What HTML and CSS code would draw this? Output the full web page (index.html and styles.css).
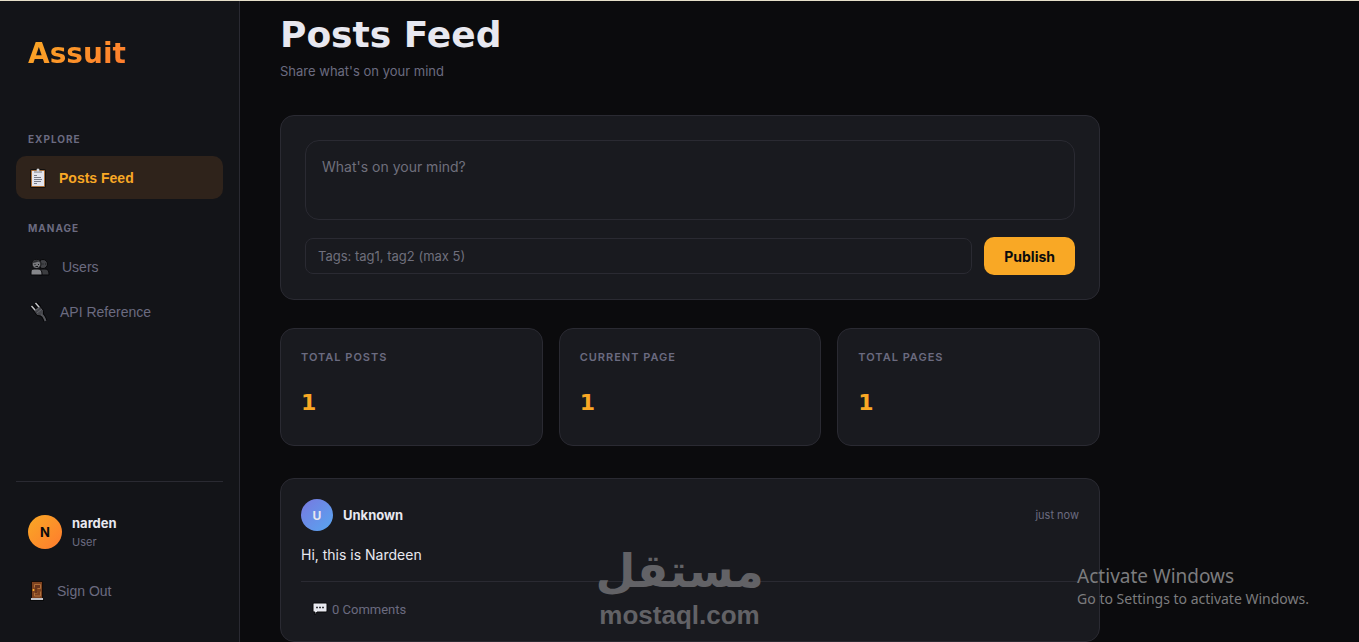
FILE: index.html
```
<!DOCTYPE html>
<html lang="en">
<head>
<meta charset="UTF-8">
<meta name="viewport" content="width=device-width, initial-scale=1.0">
<title>Assuit - Posts Feed</title>
<link rel="stylesheet" href="styles.css">
</head>
<body>
<aside class="sidebar">
  <div class="logo">Assuit</div>
  <nav class="nav">
    <div class="nav-label">Explore</div>
    <button type="button" class="nav-item active">
      <svg class="icon-board" width="17" height="20" viewBox="0 0 17 20">
        <rect x="0" y="1" width="16" height="19" rx="2" fill="#120f0d"/>
        <rect x="1" y="2" width="14" height="17" rx="1" fill="#a8703c"/>
        <rect x="2" y="3" width="12" height="15" fill="#e3e5ee"/>
        <path d="M4 3h8v2H4z" fill="#aeb0b8"/>
        <circle cx="8" cy="2" r="1.5" fill="#d5d7dd"/>
        <path d="M4 7.500h3M4 9.500h7M4 11.500h8M4 13.500h7M4 15.500h3" stroke="#777b86"/>
      </svg>
      <span>Posts Feed</span>
    </button>
    <div class="nav-label">Manage</div>
    <button type="button" class="nav-item">
      <svg class="icon-users" width="20" height="18" viewBox="0 0 20 18">
        <path d="M9 17v-3c0-2 1-3 3-3h3c3 0 4 2 4 5v1z" fill="#3c3d40" stroke="#070709"/>
        <circle cx="13" cy="6" r="4.500" fill="#424347" stroke="#070709"/>
        <path d="M1 17v-3c0-2 1-3 3-3h4c3 0 4 2 4 5v1z" fill="#85868a" stroke="#070709"/>
        <circle cx="6.500" cy="6" r="4.500" fill="#77787c" stroke="#070709"/>
        <path d="M2.500 5c1-4 7-4 8 0l-2-1.500-3 1z" fill="#2c2d30"/>
        <path d="M4.500 6.500h1M8 6.500h1M5.500 8.500h2.500M12.500 6h1M15 6h1" stroke="#17181b"/>
      </svg>
      <span>Users</span>
    </button>
    <button type="button" class="nav-item">
      <svg class="icon-plug" width="18" height="20" viewBox="0 0 18 20">
        <path d="M10 12c4 1 4 4 5.500 7" fill="none" stroke="#050506" stroke-width="4"/>
        <path d="M1.500 4l4 4M5.500 1l4 4" stroke="#050506" stroke-width="4"/>
        <path d="M3.500 8.500l6-5 4 5v4l-2.500 1.500-4-.5z" fill="#45464b" stroke="#050506"/>
        <path d="M1.500 4l3.500 4M5.500 1l3.500 4" stroke="#c3c4c8" stroke-width="1.500"/>
        <path d="M5 9l5-4M7 11l5-4" stroke="#66676d"/>
        <path d="M11 12.500c3 1 3 3 4.500 6.500" fill="none" stroke="#55565b" stroke-width="2"/>
      </svg>
      <span>API Reference</span>
    </button>
  </nav>
  <div class="sidebar-footer">
    <div class="user">
      <div class="avatar">N</div>
      <div class="user-info">
        <div class="user-name">narden</div>
        <div class="user-role">User</div>
      </div>
    </div>
    <button type="button" class="nav-item">
      <svg class="icon-door" width="15" height="20" viewBox="0 0 15 20">
        <rect x="1" y="0" width="12" height="19" rx="1" fill="#130b08"/>
        <rect x="2" y="1" width="10" height="16" fill="#7d421f"/>
        <path d="M4.500 3.500h6v4h-3M4.500 3.500v3M10.500 10.500v4.500h-6v-3h3" fill="none" stroke="#b06f3a"/>
        <path d="M5 4h5v3H7v5H5z" fill="#68351c"/>
        <circle cx="3.500" cy="9" r="1" fill="#ffb52c"/>
        <path d="M1 19v-2h12v2z" fill="#c1c1c5"/>
        <path d="M0 19.500h14" stroke="#08090a"/>
      </svg>
      <span>Sign Out</span>
    </button>
  </div>
</aside>

<main class="main">
  <div class="content">
    <h1>Posts Feed</h1>
    <p class="subtitle">Share what's on your mind</p>

    <form class="card composer" onsubmit="return false;">
      <textarea aria-label="Post text" placeholder="What's on your mind?"></textarea>
      <div class="composer-row">
        <input type="text" aria-label="Tags" placeholder="Tags: tag1, tag2 (max 5)">
        <button type="submit" class="publish">Publish</button>
      </div>
    </form>

    <div class="stats">
      <div class="card stat">
        <div class="stat-label">Total Posts</div>
        <div class="stat-value">1</div>
      </div>
      <div class="card stat">
        <div class="stat-label">Current Page</div>
        <div class="stat-value">1</div>
      </div>
      <div class="card stat">
        <div class="stat-label">Total Pages</div>
        <div class="stat-value">1</div>
      </div>
    </div>

    <article class="card post">
      <div class="post-header">
        <div class="avatar post-avatar">U</div>
        <div class="post-author">Unknown</div>
        <div class="post-time">just now</div>
      </div>
      <p class="post-text">Hi, this is Nardeen</p>
      <div class="post-actions">
        <button type="button" class="comments">
          <svg width="16" height="14" viewBox="0 0 16 14">
            <path d="M2 1h12q1 0 1 1v7q0 1-1 1H5l-2 3v-3H2q-1 0-1-1V2q0-1 1-1z" fill="#e9eaf0" stroke="#08090b"/>
            <path d="M4 5.500h2M7 5.500h2M10 5.500h2" stroke="#393a40" stroke-width="1.500"/>
          </svg>
          <span>0 Comments</span>
        </button>
      </div>
    </article>
  </div>
</main>

<div class="watermark">
  <div class="watermark-ar" lang="ar" dir="rtl">مستقل</div>
  <div class="watermark-en">mostaql.com</div>
</div>
<div class="activate">
  <div class="activate-title">Activate Windows</div>
  <div>Go to Settings to activate Windows.</div>
</div>
</body>
</html>
```
FILE: styles.css
```
* {
  box-sizing: border-box;
  margin: 0;
  padding: 0;
}
body {
  display: flex;
  height: 100vh;
  overflow: hidden;
  border-top: 1px solid #e6dfc9;
  background: #0b0b0d;
  color: #e8e8f0;
  font-family: Inter, "Open Sans", sans-serif;
  font-size: 14px;
}
button, input, textarea {
  font-family: inherit;
}

/* sidebar */
.sidebar {
  display: flex;
  flex-direction: column;
  flex-shrink: 0;
  width: 240px;
  padding: 38px 16px 28px;
  background: #131418;
  border-right: 1px solid #2a2a32;
}
.logo {
  align-self: flex-start;
  margin: 0 12px 40px;
  font-family: "DejaVu Sans", sans-serif;
  font-size: 28px;
  font-weight: bold;
  line-height: 30px;
  background: linear-gradient(135deg, #f9a825, #ff7b2e);
  -webkit-background-clip: text;
  background-clip: text;
  color: transparent;
}
.nav {
  flex: 1;
}
.nav-label {
  padding: 0 12px;
  margin: 22px 0 9px;
  color: #6b6b80;
  font-size: 10px;
  font-weight: 700;
  letter-spacing: 1px;
  line-height: 16px;
  text-transform: uppercase;
}
.nav-item + .nav-label {
  margin: 21px 0 9px;
}
.nav-item {
  display: flex;
  align-items: center;
  gap: 12px;
  width: 100%;
  height: 43px;
  margin-bottom: 2px;
  padding: 0 14px;
  border: none;
  border-radius: 10px;
  background: none;
  color: #6b6b80;
  font-family: "Liberation Sans", Arial, sans-serif;
  font-size: 14px;
  cursor: pointer;
}
.nav-item.active {
  background: #2f231b;
  color: #f9a825;
  font-weight: bold;
}
.sidebar-footer {
  border-top: 1px solid #2a2a32;
  padding-top: 31px;
}
.user {
  display: flex;
  align-items: center;
  gap: 10px;
  padding: 0 12px;
  margin-bottom: 18px;
}
.avatar {
  display: flex;
  align-items: center;
  justify-content: center;
  width: 34px;
  height: 34px;
  border-radius: 50%;
  background: linear-gradient(135deg, #f9a825, #ff7b2e);
  color: #0b0b0d;
  font-size: 13px;
  font-weight: 700;
}
.user-name {
  font-size: 13px;
  font-weight: 700;
  line-height: 20px;
}
.user-role {
  color: #6b6b80;
  font-size: 11px;
  line-height: 18px;
}

/* main column */
.main {
  flex: 1;
  min-width: 0;
  height: 100%;
  padding: 14px 40px 0;
  overflow: hidden;
}
.content {
  max-width: 820px;
}
h1 {
  font-family: "DejaVu Sans", sans-serif;
  font-size: 36px;
  font-weight: bold;
  line-height: 40px;
}
.subtitle {
  margin: 6px 0 34px;
  color: #6b6b80;
  font-size: 13px;
  line-height: 20px;
}
.card {
  background: #191a1f;
  border: 1px solid #2a2a32;
  border-radius: 14px;
}
.composer {
  padding: 24px;
  margin-bottom: 28px;
}
.composer textarea,
.composer input {
  width: 100%;
  background: #191a1f;
  border: 1px solid #2a2a32;
  color: #e8e8f0;
  outline: none;
}
.composer textarea {
  display: block;
  height: 80px;
  margin-bottom: 17px;
  padding: 16px;
  border-radius: 14px;
  font-size: 14px;
  line-height: 20px;
  resize: none;
}
.composer-row {
  display: flex;
  align-items: center;
  gap: 12px;
}
.composer input {
  flex: 1;
  height: 36px;
  padding: 0 12px;
  border-radius: 8px;
  font-size: 13px;
}
::placeholder {
  color: #6f6f7c;
}
.publish {
  height: 38px;
  padding: 0 20px;
  border: none;
  border-radius: 10px;
  background: #f9a825;
  color: #0b0b0d;
  font-size: 14px;
  font-weight: 700;
  cursor: pointer;
}
.stats {
  display: grid;
  grid-template-columns: repeat(3, 1fr);
  gap: 16px;
  margin-bottom: 32px;
}
.stat {
  padding: 20px;
  height: 118px;
}
.stat-label {
  color: #6b6b80;
  font-size: 11px;
  font-weight: 600;
  letter-spacing: 1px;
  line-height: 16px;
  text-transform: uppercase;
}
.stat-value {
  margin-top: 20px;
  color: #f9a825;
  font-family: "DejaVu Sans", sans-serif;
  font-size: 22px;
  font-weight: bold;
  line-height: 36px;
}
.post {
  padding: 20px 20px 16px;
}
.post-header {
  display: flex;
  align-items: center;
  gap: 10px;
}
.post-avatar {
  width: 32px;
  height: 32px;
  background: linear-gradient(135deg, #7878e0, #58a6f0);
  color: #e8e8f0;
  font-size: 12px;
}
.post-author {
  flex: 1;
  font-size: 13px;
  font-weight: 700;
}
.post-time {
  color: #6b6b80;
  font-size: 11px;
}
.post-text {
  margin: 12px 0 15px;
  font-size: 14px;
  line-height: 23px;
}
.post-actions {
  border-top: 1px solid #2a2a32;
  padding: 11px 11px 0;
}
.comments {
  display: flex;
  align-items: center;
  gap: 4px;
  height: 32px;
  border: none;
  background: none;
  color: #6b6b80;
  font-family: Roboto, sans-serif;
  font-size: 13px;
  cursor: pointer;
}

/* overlays */
.watermark,
.activate {
  position: absolute;
  pointer-events: none;
}
.watermark {
  bottom: 10px;
  left: 50%;
  transform: translateX(-50%);
  text-align: center;
  color: #626266;
}
.watermark-ar {
  font-family: "DejaVu Sans", sans-serif;
  font-size: 46px;
  font-weight: bold;
  line-height: 54px;
}
.watermark-en {
  font-family: "Liberation Sans", Arial, sans-serif;
  font-size: 26px;
  font-weight: bold;
  line-height: 34px;
}
.activate {
  right: 50px;
  bottom: 33px;
  color: #7c7c7e;
  font-family: "Noto Sans", sans-serif;
  font-size: 14px;
  line-height: 20px;
}
.activate-title {
  font-size: 19px;
  line-height: 25px;
}
```
